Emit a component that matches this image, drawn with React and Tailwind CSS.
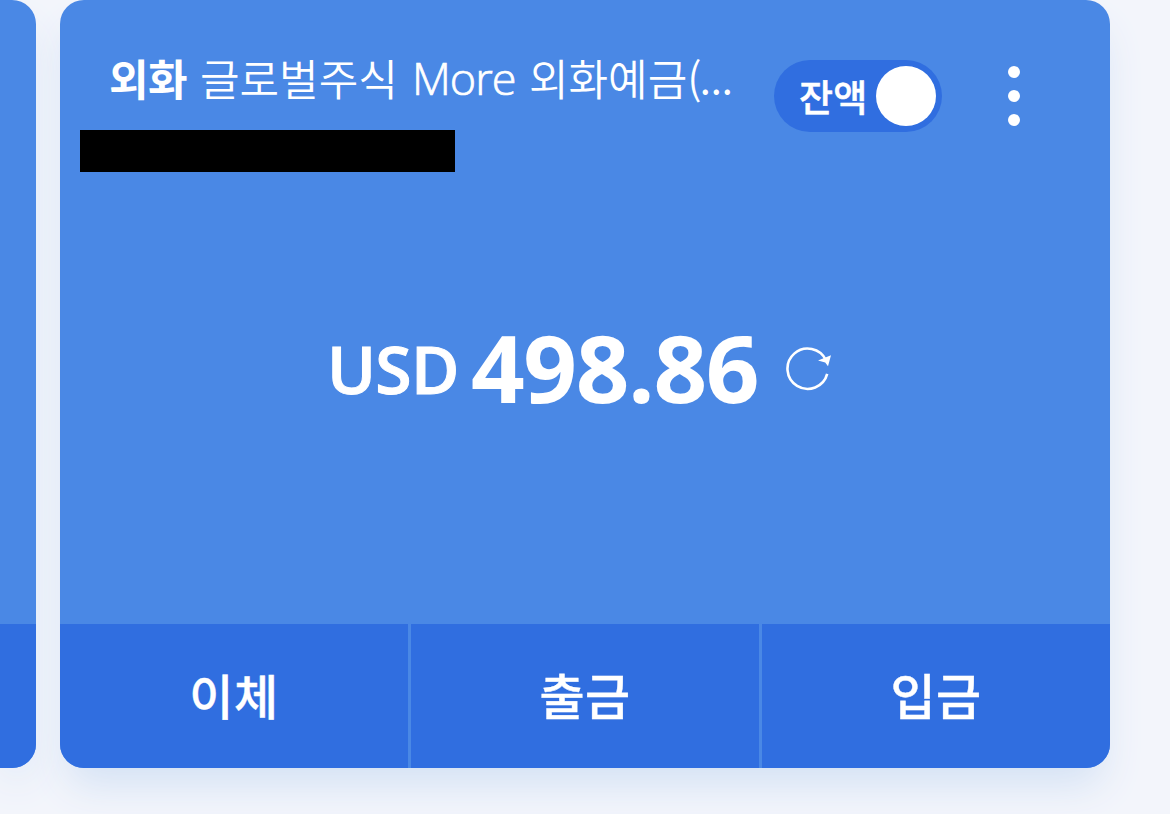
const actions = [
  { label: '이체', className: 'text-[48px] tracking-[0.5px]' },
  { label: '출금', className: 'text-[49px] tracking-[0.5px]' },
  { label: '입금', className: 'text-[49px] tracking-[0.5px]' },
];

const RefreshIcon = () => (
  <svg className="mt-0.5 h-[46px] w-[46px]" viewBox="0 0 46 46" fill="none">
    <path d="M42.2 28.9A20.2 20.2 0 1 1 41 15.2" stroke="white" strokeWidth="2.6" />
    <path d="M33 15.6L46 10.2L43 21.2L40.2 17.5Z" fill="white" />
  </svg>
);

const BalanceToggle = () => (
  <button className="flex h-[72px] w-[168px] items-center justify-between rounded-full bg-[#306ee0] pr-1.5 pl-[25px]">
    <span className="text-[37px] leading-[72px] font-medium tracking-[0.3px] [-webkit-text-stroke:0.5px_white]">잔액</span>
    <span className="h-[60px] w-[60px] rounded-full bg-white" />
  </button>
);

const AccountCard = () => (
  <section className="flex h-[768px] w-[1050px] shrink-0 flex-col overflow-hidden rounded-3xl bg-[#4a88e5] text-white">
    <header className="flex h-[130px] items-start pt-[60px] pl-[49px]">
      <h2 className="-mt-[3px] flex h-10 w-[665px] items-center text-[43px] leading-10 font-[350] whitespace-nowrap">
        <span className="w-[91px] font-bold tracking-[-0.5px]">외화</span>
        <span className="w-[212px]">글로벌주식</span>
        <span className="w-[117px] pt-0.5 font-['Open_Sans'] text-[45px] font-light tracking-[-1px] [-webkit-text-stroke:0.7px_white]">More</span>
        <span>외화예금</span>
        <span className="pb-1">(</span>
        <span className="-ml-0.5 pb-1 tracking-[-0.5px]">...</span>
      </h2>
      <BalanceToggle />
      <button className="ml-[66px] flex flex-col gap-3 pt-1.5">
        <span className="h-3 w-3 rounded-full bg-white" />
        <span className="h-3 w-3 rounded-full bg-white" />
        <span className="h-3 w-3 rounded-full bg-white" />
      </button>
    </header>
    <div className="ml-5 h-[42px] w-[375px] bg-black" />
    <div className="mt-[145px] flex h-[100px] items-center pl-[267px] font-['Open_Sans'] font-bold whitespace-nowrap">
      <span className="w-[144px] pt-0.5 text-[66px] leading-none font-semibold tracking-[-0.7px] [-webkit-text-stroke:1px_white]">USD</span>
      <span className="w-[314px] text-[94px] leading-[100px] tracking-[-1.4px]">498.86</span>
      <RefreshIcon />
    </div>
    <footer className="mt-auto flex h-36 gap-[3px]">
      {actions.map(({ label, className }) => (
        <button key={label} className={`${className} w-[348px] bg-[#306ee0] pb-1 leading-[140px] font-medium [-webkit-text-stroke:0.4px_white]`}>
          {label}
        </button>
      ))}
    </footer>
  </section>
);

const App = () => {
  return (
    <main className="flex h-[814px] w-[1170px] gap-6 overflow-hidden bg-[#f3f5fb] font-['Noto_Sans_CJK_KR',sans-serif]">
      <div className="relative z-10 h-[768px] w-9 shrink-0 rounded-r-3xl shadow-[0_20px_40px_-8px_#d3e1f4]">
        <div className="flex h-full flex-col overflow-hidden rounded-r-3xl bg-[#4a88e5]">
          <div className="mt-auto h-36 bg-[#306ee0]" />
        </div>
      </div>
      <div className="relative z-20 h-[768px] shrink-0 rounded-3xl">
        <AccountCard />
      </div>
      {/* sits under both cards so the glow never tints its neighbour */}
      <div className="-ml-[1074px] h-[768px] w-[1050px] shrink-0 rounded-3xl shadow-[0_24px_40px_-8px_#d3e1f4]" />
    </main>
  );
};

export default App;
